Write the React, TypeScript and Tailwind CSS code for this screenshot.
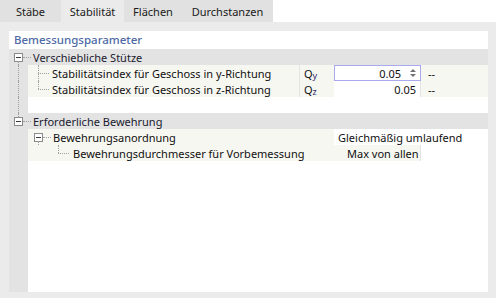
import type { ReactNode } from 'react';

const font = { fontFamily: '"Noto Sans", "Liberation Sans", sans-serif' };

const tabs = [
  { label: 'Stäbe', w: 'w-[61px]' },
  { label: 'Stabilität', w: 'w-[63px]' },
  { label: 'Flächen', w: 'w-[58px]' },
  { label: 'Durchstanzen', w: 'w-[91px]' },
];

function Box() {
  return (
    <span className="flex h-[9px] w-[9px] items-center justify-center border border-[#8a8a8a] bg-white">
      <span className="h-px w-[5px] bg-[#3a3a3a]" />
    </span>
  );
}

function VDots({ className }: { className: string }) {
  return <span className={`absolute w-0 border-l border-dotted border-[#a0a0a0] ${className}`} />;
}

function HDots({ className }: { className: string }) {
  return <span className={`absolute h-0 border-t border-dotted border-[#a0a0a0] ${className}`} />;
}

function GroupRow({ label, lineBelow, lineAbove }: { label: string; lineBelow?: boolean; lineAbove?: boolean }) {
  return (
    <div className="relative flex h-4 items-center bg-[#e3e3e3]">
      {lineAbove && <VDots className="left-[9px] top-0 h-[4px]" />}
      {lineBelow && <VDots className="left-[9px] top-[12px] h-[4px]" />}
      <span className="ml-[5px]">
        <Box />
      </span>
      <HDots className="left-[14px] top-[8px] w-[8px]" />
      <span className="ml-[10px] text-[#1a1a2e]">{label}</span>
    </div>
  );
}

function Gutter({ line }: { line?: boolean }) {
  return (
    <div className="relative h-4 w-[19px] shrink-0 bg-[#e3e3e3]">
      {line && <VDots className="left-[9px] top-0 h-4" />}
    </div>
  );
}

function ParamRow({
  label,
  sub,
  children,
  last,
}: {
  label: string;
  sub: string;
  children: ReactNode;
  last?: boolean;
}) {
  return (
    <div className="flex h-4">
      <Gutter line />
      <div className="relative flex w-[272px] items-center border-r border-[#e4e4e4] bg-[#f7f7f2]">
        <VDots className={`left-[10px] top-0 ${last ? 'h-[8px]' : 'h-4'}`} />
        <HDots className="left-[10px] top-[8px] w-[11px]" />
        <span className="ml-[24px] whitespace-nowrap text-[#101010]">{label}</span>
      </div>
      <div className="flex w-[34px] items-center bg-[#f7f7f2] pl-[4px] text-[#101010]">
        Q<span className="mt-[4px] text-[9px] text-[#2a2a6a]">{sub}</span>
      </div>
      {children}
      <div className="flex w-[67px] items-center bg-[#f7f7f2] pl-[7px] text-[#101010]">--</div>
    </div>
  );
}

export default function App() {
  return (
    <div className="h-[298px] w-[496px] overflow-hidden bg-white text-[11px] leading-none" style={font}>
      <div className="flex h-[22px]">
        {tabs.map((t, i) => (
          <div
            key={t.label}
            className={`flex items-center justify-center text-[#1a1a1a] ${t.w} ${i === 1 ? 'bg-[#ebebeb]' : 'bg-[#e1e1e1]'}`}
          >
            {t.label}
          </div>
        ))}
      </div>
      <div className="flex h-[276px] flex-col bg-[#ebebeb] pb-[6px] pl-[9px] pr-[8px] pt-[9px]">
        <div className="flex flex-1 flex-col bg-white">
          <div className="flex h-[18px] items-center pl-[5px] text-[11.5px] font-medium text-[#4d6aa5]">
            Bemessungsparameter
          </div>
          <GroupRow label="Verschiebliche Stütze" lineBelow />
          <ParamRow label="Stabilitätsindex für Geschoss in y-Richtung" sub="y">
            <div className="flex w-[87px] items-center justify-end border border-[#a9a9f0] bg-white pr-[4px] text-[#101010]">
              0.05
              <span className="ml-[9px] flex flex-col items-center gap-[2px]">
                <span className="h-0 w-0 border-x-[3px] border-b-[3px] border-x-transparent border-b-[#707070]" />
                <span className="h-0 w-0 border-x-[3px] border-t-[3px] border-x-transparent border-t-[#707070]" />
              </span>
            </div>
          </ParamRow>
          <ParamRow label="Stabilitätsindex für Geschoss in z-Richtung" sub="z" last>
            <div className="flex w-[87px] items-center justify-end border-r border-[#e4e4e4] bg-white pr-[4px] text-[#101010]">
              0.05
            </div>
          </ParamRow>
          <div className="flex h-4">
            <Gutter line />
          </div>
          <GroupRow label="Erforderliche Bewehrung" lineAbove />
          <div className="flex h-4">
            <Gutter />
            <div className="relative flex w-[306px] items-center bg-[#f7f7f2]">
              <span className="ml-[6px]">
                <Box />
              </span>
              <HDots className="left-[15px] top-[8px] w-[8px]" />
              <VDots className="left-[10px] top-[12px] h-[4px]" />
              <span className="ml-[10px] text-[#101010]">Bewehrungsanordnung</span>
            </div>
            <div className="flex flex-1 items-center whitespace-nowrap bg-white pl-[4px] text-[#101010]">
              Gleichmäßig umlaufend
            </div>
          </div>
          <div className="flex h-4">
            <Gutter />
            <div className="relative flex w-[306px] items-center bg-[#f7f7f2]">
              <VDots className="left-[30px] top-0 h-[8px]" />
              <HDots className="left-[30px] top-[8px] w-[11px]" />
              <span className="ml-[45px] whitespace-nowrap text-[#101010]">Bewehrungsdurchmesser für Vorbemessung</span>
            </div>
            <div className="flex w-[87px] items-center whitespace-nowrap border-r border-[#e4e4e4] bg-[#f7f7f2] pl-[13px] text-[#101010]">
              Max von allen
            </div>
            <div className="flex-1 bg-white" />
          </div>
          <div className="flex flex-1">
            <div className="w-[19px] bg-[#e3e3e3]" />
          </div>
        </div>
      </div>
    </div>
  );
}
